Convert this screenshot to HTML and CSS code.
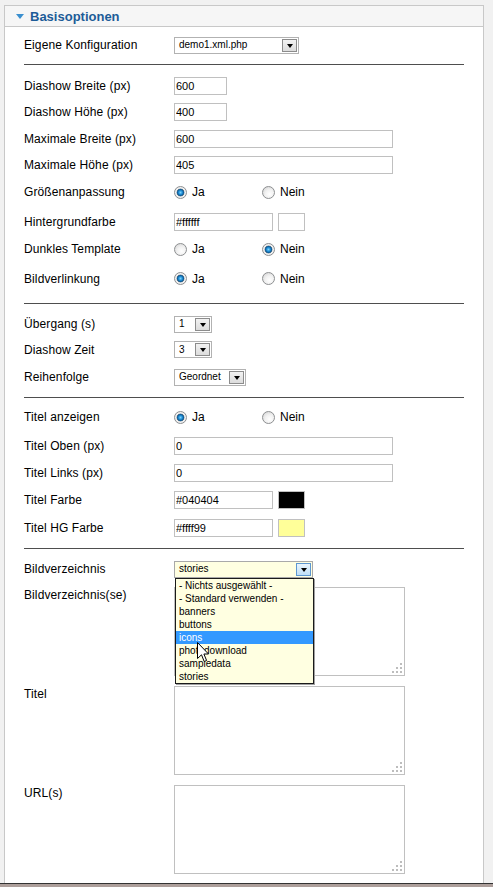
FILE: index.html
```html
<!DOCTYPE html>
<html lang="de">
<head>
<meta charset="utf-8">
<title>Basisoptionen</title>
<link rel="stylesheet" href="styles.css">
</head>
<body>
<div class="page">
  <div class="panel">
    <div class="panel-head"><span class="tri"></span><span class="title">Basisoptionen</span></div>
    <div class="panel-body">
      <div class="row h26">
        <span class="lbl">Eigene Konfiguration</span>
        <div class="select w125"><span class="val">demo1.xml.php</span><span class="btn"></span></div>
      </div>
      <div class="sep"></div>

      <div class="row h26"><span class="lbl">Diashow Breite (px)</span><input class="field w53" type="text" value="600"></div>
      <div class="row h26"><span class="lbl">Diashow Höhe (px)</span><input class="field w53" type="text" value="400"></div>
      <div class="row h27"><span class="lbl">Maximale Breite (px)</span><input class="field w219" type="text" value="600"></div>
      <div class="row h26"><span class="lbl">Maximale Höhe (px)</span><input class="field w219" type="text" value="405"></div>
      <div class="row h28"><span class="lbl">Größenanpassung</span>
        <div class="radios"><span class="opt"><span class="radio on"></span>Ja</span><span class="opt"><span class="radio"></span>Nein</span></div>
      </div>
      <div class="row h32"><span class="lbl">Hintergrundfarbe</span>
        <div class="color"><input class="field w99" type="text" value="#ffffff"><span class="swatch white"></span></div>
      </div>
      <div class="row h22"><span class="lbl">Dunkles Template</span>
        <div class="radios"><span class="opt"><span class="radio"></span>Ja</span><span class="opt"><span class="radio on"></span>Nein</span></div>
      </div>
      <div class="row h37"><span class="lbl">Bildverlinkung</span>
        <div class="radios"><span class="opt"><span class="radio on"></span>Ja</span><span class="opt"><span class="radio"></span>Nein</span></div>
      </div>
      <div class="sep"></div>

      <div class="row h24"><span class="lbl">Übergang (s)</span>
        <div class="select w38"><span class="val">1</span><span class="btn"></span></div>
      </div>
      <div class="row h27"><span class="lbl">Diashow Zeit</span>
        <div class="select w38"><span class="val">3</span><span class="btn"></span></div>
      </div>
      <div class="row h28"><span class="lbl">Reihenfolge</span>
        <div class="select w72"><span class="val">Geordnet</span><span class="btn"></span></div>
      </div>
      <div class="sep"></div>

      <div class="row h26 pb4"><span class="lbl">Titel anzeigen</span>
        <div class="radios"><span class="opt"><span class="radio on"></span>Ja</span><span class="opt"><span class="radio"></span>Nein</span></div>
      </div>
      <div class="row h27"><span class="lbl">Titel Oben (px)</span><input class="field w219" type="text" value="0"></div>
      <div class="row h27"><span class="lbl">Titel Links (px)</span><input class="field w219" type="text" value="0"></div>
      <div class="row h27"><span class="lbl">Titel Farbe</span>
        <div class="color"><input class="field w99" type="text" value="#040404"><span class="swatch black"></span></div>
      </div>
      <div class="row h29"><span class="lbl">Titel HG Farbe</span>
        <div class="color"><input class="field w99" type="text" value="#ffff99"><span class="swatch yellow"></span></div>
      </div>
      <div class="sep"></div>

      <div class="row h24"><span class="lbl">Bildverzeichnis</span>
        <div class="select w139 open"><span class="val">stories</span><span class="btn"></span>
          <ul class="list">
            <li>- Nichts ausgewählt -</li>
            <li>- Standard verwenden -</li>
            <li>banners</li>
            <li>buttons</li>
            <li class="hl">icons</li>
            <li>photodownload</li>
            <li>sampledata</li>
            <li>stories</li>
            <li class="cursor-holder"><svg class="cursor" width="13" height="21" viewBox="0 0 13 21"><path d="M0.5 0.5 L0.5 16.5 L4.5 12.8 L7.2 19.5 L9.6 18.5 L6.9 12 L11.5 12 Z" fill="#fff" stroke="#000" stroke-width="1" stroke-linejoin="miter"/></svg></li>
          </ul>
        </div>
      </div>
      <div class="arow"><span class="lbl top">Bildverzeichnis(se)</span><div class="area"><span class="grip"></span></div></div>
      <div class="arow"><span class="lbl top">Titel</span><div class="area"><span class="grip"></span></div></div>
      <div class="arow"><span class="lbl top">URL(s)</span><div class="area"><span class="grip"></span></div></div>
    </div>
  </div>
  <div class="taskbar"></div>
</div>
</body>
</html>
```
FILE: styles.css
```css
html, body {
  margin: 0;
  padding: 0;
  background: #f1f1f1;
  font-family: "Liberation Sans", Arial, sans-serif;
  color: #000;
}
.page {
  width: 493px;
  height: 887px;
  overflow: hidden;
  padding-top: 5px;
  box-sizing: border-box;
  display: flex;
  flex-direction: column;
}
.panel {
  margin: 0 9px 0 4px;
  width: 480px;
  box-sizing: border-box;
  border: 1px solid #c8c8c8;
  border-bottom: none;
  background: #fff;
}
.panel-head {
  height: 20px;
  background: #f6f6f6;
  border-bottom: 1px solid #c8c8c8;
  display: flex;
  align-items: center;
  padding-left: 11px;
}
.tri {
  width: 0;
  height: 0;
  border-left: 4.5px solid transparent;
  border-right: 4.5px solid transparent;
  border-top: 5px solid #3a8fcf;
  margin-right: 6px;
  margin-top: 1px;
}
.title {
  font-weight: bold;
  font-size: 13px;
  color: #1d5c98;
}
.panel-body {
  padding: 5px 19px 9px 19px;
}
.row {
  display: grid;
  grid-template-columns: 150px 1fr;
  align-items: center;
  box-sizing: border-box;
}
.h22 { height: 22px; }
.h24 { height: 24px; }
.h26 { height: 26px; }
.h27 { height: 27px; }
.h28 { height: 28px; }
.h29 { height: 29px; }
.h32 { height: 32px; }
.h37 { height: 37px; }
.pb4 { padding-bottom: 4px; }
.lbl {
  font-size: 12px;
  line-height: 14px;
  letter-spacing: 0.1px;
}
.sep {
  height: 1px;
  background: #4e4e4e;
  margin: 6px 0 8px;
}
.field {
  height: 18px;
  box-sizing: border-box;
  border: 1px solid #c0c0c0;
  padding: 0 1px;
  margin: 0;
  font-family: "Liberation Sans", Arial, sans-serif;
  font-size: 11px;
  color: #000;
  background: #fff;
  outline: none;
}
.w53 { width: 53px; }
.w99 { width: 99px; }
.w219 { width: 219px; }
.color {
  display: flex;
  align-items: center;
}
.swatch {
  width: 27px;
  height: 18px;
  box-sizing: border-box;
  border: 1px solid #c0c0c0;
  margin-left: 5px;
}
.swatch.white { background: #fff; }
.swatch.black { background: #000; }
.swatch.yellow { background: #ffff99; }
.radios {
  display: flex;
  align-items: center;
}
.opt {
  width: 88px;
  display: flex;
  align-items: center;
  font-size: 12px;
  line-height: 14px;
}
.radio {
  width: 13px;
  height: 13px;
  box-sizing: border-box;
  border-radius: 50%;
  border: 1px solid #8d8f91;
  background: radial-gradient(circle at 60% 65%, #ffffff 0, #f1f1f1 45%, #cfcfcf 100%);
  margin-right: 5px;
  flex: none;
}
.radio.on {
  background: radial-gradient(circle at 50% 50%, #7fd2f7 0, #2a9ae0 1.6px, #0c5f9e 3px, #4a6f8a 3.6px, #e9e9e9 4.2px, #f4f4f4 4.8px, #cccccc 100%);
}
.select {
  position: relative;
  height: 17px;
  box-sizing: border-box;
  border: 1px solid #b2b2b2;
  background: #fff;
  display: flex;
  align-items: center;
  justify-content: space-between;
}
.w38 { width: 38px; }
.w72 { width: 72px; }
.w125 { width: 125px; }
.w139 { width: 139px; }
.val {
  font-size: 10px;
  line-height: 12px;
  padding-left: 4px;
  white-space: nowrap;
}
.btn {
  width: 15px;
  height: 13px;
  box-sizing: border-box;
  margin-right: 1px;
  border: 1px solid #8c8c8c;
  background: linear-gradient(#f2f2f2, #dcdcdc);
  display: flex;
  align-items: center;
  justify-content: center;
  flex: none;
}
.btn::after {
  content: "";
  width: 0;
  height: 0;
  border-left: 3.5px solid transparent;
  border-right: 3.5px solid transparent;
  border-top: 4px solid #000;
  margin-top: 1px;
}
.select.open {
  background: #ffffe1;
  border-color: #a9a9a9;
}
.select.open .btn {
  border-color: #5d97d1;
  background: linear-gradient(#eaf5fd, #bfdff7);
}
.list {
  position: absolute;
  top: 16px;
  left: 0;
  width: 139px;
  box-sizing: border-box;
  margin: 0;
  padding: 0;
  list-style: none;
  background: #ffffe1;
  border: 1px solid #1a1a1a;
  box-shadow: 1px 1px 0 #a0a0a0;
  z-index: 5;
}
.list li {
  height: 13px;
  font-size: 10px;
  line-height: 13px;
  padding-left: 3px;
  white-space: nowrap;
}
.list li.hl {
  background: #3399ff;
  color: #fff;
}
.list li.cursor-holder {
  position: absolute;
  height: 0;
  padding: 0;
  left: 21px;
  top: 63px;
}
.cursor {
  display: block;
}
.arow {
  display: grid;
  grid-template-columns: 150px 1fr;
  align-items: start;
  margin-top: 6px;
}
.arow + .arow {
  margin-top: 10px;
}
.lbl.top {
  line-height: 15px;
  padding-top: 1px;
}
.area {
  position: relative;
  width: 231px;
  height: 89px;
  box-sizing: border-box;
  border: 1px solid #c0c0c0;
  background: #fff;
}
.grip {
  position: absolute;
  right: 2px;
  bottom: 2px;
  width: 10px;
  height: 10px;
  background:
    linear-gradient(#bdbdbd, #bdbdbd) 8px 0 / 2px 2px no-repeat,
    linear-gradient(#bdbdbd, #bdbdbd) 4px 4px / 2px 2px no-repeat,
    linear-gradient(#bdbdbd, #bdbdbd) 8px 4px / 2px 2px no-repeat,
    linear-gradient(#bdbdbd, #bdbdbd) 0 8px / 2px 2px no-repeat,
    linear-gradient(#bdbdbd, #bdbdbd) 4px 8px / 2px 2px no-repeat,
    linear-gradient(#bdbdbd, #bdbdbd) 8px 8px / 2px 2px no-repeat;
}
.taskbar {
  height: 4px;
  box-sizing: border-box;
  border-top: 1px solid #333;
  background: #ad9f9b;
  flex: none;
}
```
